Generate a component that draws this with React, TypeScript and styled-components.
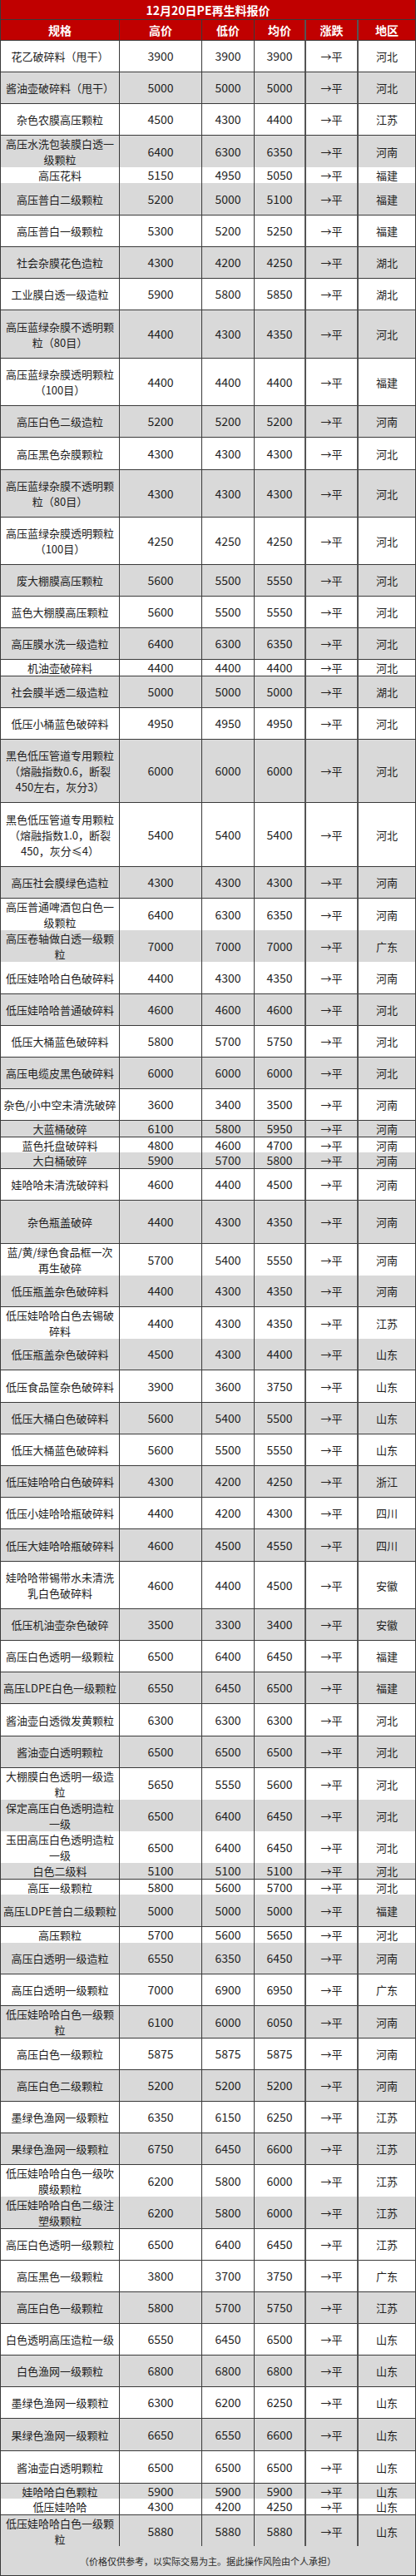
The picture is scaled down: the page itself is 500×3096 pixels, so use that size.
import styled, { createGlobalStyle } from 'styled-components';

const GlobalStyle = createGlobalStyle`
  html, body {
    margin: 0;
    padding: 0;
    background: #ffffff;
  }
  body {
    font-family: 'Noto Sans CJK SC', 'Noto Sans', sans-serif;
  }
  * {
    box-sizing: border-box;
  }
`;

// [top y of the row, 规格, 高价, 低价, 均价, 地区]
type PriceRow = [number, string, number, number, number, string];

const HEADERS = ['规格', '高价', '低价', '均价', '涨跌', '地区'];
const TABLE_END = 3060;

const ROWS: PriceRow[] = [
  [49, '花乙破碎料（甩干）', 3900, 3900, 3900, '河北'],
  [87, '酱油壶破碎料（甩干）', 5000, 5000, 5000, '河北'],
  [125, '杂色农膜高压颗粒', 4500, 4300, 4400, '江苏'],
  [163, '高压水洗包装膜白透一\n级颗粒', 6400, 6300, 6350, '河南'],
  [201, '高压花料', 5150, 4950, 5050, '福建'],
  [220, '高压普白二级颗粒', 5200, 5000, 5100, '福建'],
  [259, '高压普白一级颗粒', 5300, 5200, 5250, '福建'],
  [297, '社会杂膜花色造粒', 4300, 4200, 4250, '湖北'],
  [335, '工业膜白透一级造粒', 5900, 5800, 5850, '湖北'],
  [373, '高压蓝绿杂膜不透明颗\n粒（80目）', 4400, 4300, 4350, '河北'],
  [431, '高压蓝绿杂膜透明颗粒\n（100目）', 4400, 4400, 4400, '福建'],
  [488, '高压白色二级造粒', 5200, 5200, 5200, '河南'],
  [526, '高压黑色杂膜颗粒', 4300, 4300, 4300, '河北'],
  [565, '高压蓝绿杂膜不透明颗\n粒（80目）', 4300, 4300, 4300, '河北'],
  [622, '高压蓝绿杂膜透明颗粒\n（100目）', 4250, 4250, 4250, '河北'],
  [679, '废大棚膜高压颗粒', 5600, 5500, 5550, '河北'],
  [717, '蓝色大棚膜高压颗粒', 5600, 5500, 5550, '河北'],
  [755, '高压膜水洗一级造粒', 6400, 6300, 6350, '河北'],
  [793, '机油壶破碎料', 4400, 4400, 4400, '河北'],
  [813, '社会膜半透二级造粒', 5000, 5000, 5000, '湖北'],
  [851, '低压小桶蓝色破碎料', 4950, 4950, 4950, '河北'],
  [889, '黑色低压管道专用颗粒\n（熔融指数0.6，断裂\n450左右，灰分3）', 6000, 6000, 6000, '河北'],
  [965, '黑色低压管道专用颗粒\n（熔融指数1.0，断裂\n450，灰分≤4）', 5400, 5400, 5400, '河北'],
  [1042, '高压社会膜绿色造粒', 4300, 4300, 4300, '河南'],
  [1080, '高压普通啤酒包白色一\n级颗粒', 6400, 6300, 6350, '河南'],
  [1118, '高压卷轴做白透一级颗\n粒', 7000, 7000, 7000, '广东'],
  [1156, '低压娃哈哈白色破碎料', 4400, 4300, 4350, '河南'],
  [1195, '低压娃哈哈普通破碎料', 4600, 4600, 4600, '河北'],
  [1233, '低压大桶蓝色破碎料', 5800, 5700, 5750, '河北'],
  [1271, '高压电缆皮黑色破碎料', 6000, 6000, 6000, '河北'],
  [1309, '杂色/小中空未清洗破碎', 3600, 3400, 3500, '河南'],
  [1347, '大蓝桶破碎', 6100, 5800, 5950, '河南'],
  [1367, '蓝色托盘破碎料', 4800, 4600, 4700, '河南'],
  [1385, '大白桶破碎', 5900, 5700, 5800, '河南'],
  [1405, '娃哈哈未清洗破碎料', 4600, 4400, 4500, '河南'],
  [1443, '杂色瓶盖破碎', 4400, 4300, 4350, '河南'],
  [1495, '蓝/黄/绿色食品框一次\n再生破碎', 5700, 5400, 5550, '河南'],
  [1533, '低压瓶盖杂色破碎料', 4400, 4300, 4350, '河南'],
  [1571, '低压娃哈哈白色去锡破\n碎料', 4400, 4300, 4350, '江苏'],
  [1609, '低压瓶盖杂色破碎料', 4500, 4300, 4400, '山东'],
  [1647, '低压食品筐杂色破碎料', 3900, 3600, 3750, '山东'],
  [1686, '低压大桶白色破碎料', 5600, 5400, 5500, '山东'],
  [1724, '低压大桶蓝色破碎料', 5600, 5500, 5550, '山东'],
  [1762, '低压娃哈哈白色破碎料', 4300, 4200, 4250, '浙江'],
  [1800, '低压小娃哈哈瓶破碎料', 4400, 4200, 4300, '四川'],
  [1838, '低压大娃哈哈瓶破碎料', 4600, 4500, 4550, '四川'],
  [1877, '娃哈哈带锡带水未清洗\n乳白色破碎料', 4600, 4400, 4500, '安徽'],
  [1934, '低压机油壶杂色破碎', 3500, 3300, 3400, '安徽'],
  [1972, '高压白色透明一级颗粒', 6500, 6400, 6450, '福建'],
  [2010, '高压LDPE白色一级颗粒', 6550, 6450, 6500, '福建'],
  [2048, '酱油壶白透微发黄颗粒', 6300, 6300, 6300, '河北'],
  [2087, '酱油壶白透明颗粒', 6500, 6500, 6500, '河北'],
  [2125, '大棚膜白色透明一级造\n粒', 5650, 5550, 5600, '河北'],
  [2163, '保定高压白色透明造粒\n一级', 6500, 6400, 6450, '河北'],
  [2201, '玉田高压白色透明造粒\n一级', 6500, 6400, 6450, '河北'],
  [2239, '白色二级料', 5100, 5100, 5100, '河北'],
  [2259, '高压一级颗粒', 5800, 5600, 5700, '河北'],
  [2277, '高压LDPE普白二级颗粒', 5000, 5000, 5000, '福建'],
  [2316, '高压颗粒', 5700, 5600, 5650, '河北'],
  [2335, '高压白透明一级造粒', 6550, 6350, 6450, '河南'],
  [2373, '高压白透明一级颗粒', 7000, 6900, 6950, '广东'],
  [2411, '低压娃哈哈白色一级颗\n粒', 6100, 6000, 6050, '河南'],
  [2450, '高压白色一级颗粒', 5875, 5875, 5875, '河南'],
  [2488, '高压白色二级颗粒', 5200, 5200, 5200, '河南'],
  [2526, '墨绿色渔网一级颗粒', 6350, 6150, 6250, '江苏'],
  [2564, '果绿色渔网一级颗粒', 6750, 6450, 6600, '江苏'],
  [2602, '低压娃哈哈白色一级吹\n膜级颗粒', 6200, 5800, 6000, '江苏'],
  [2640, '低压娃哈哈白色二级注\n塑级颗粒', 6200, 5800, 6000, '江苏'],
  [2679, '高压白色透明一级颗粒', 6500, 6400, 6450, '江苏'],
  [2717, '高压黑色一级颗粒', 3800, 3700, 3750, '广东'],
  [2755, '高压白色一级颗粒', 5800, 5700, 5750, '江苏'],
  [2793, '白色透明高压造粒一级', 6550, 6450, 6500, '山东'],
  [2831, '白色渔网一级颗粒', 6800, 6800, 6800, '山东'],
  [2869, '墨绿色渔网一级颗粒', 6300, 6200, 6250, '山东'],
  [2907, '果绿色渔网一级颗粒', 6650, 6550, 6600, '山东'],
  [2946, '酱油壶白透明颗粒', 6500, 6500, 6500, '山东'],
  [2985, '娃哈哈白色颗粒', 5900, 5900, 5900, '山东'],
  [3003, '低压娃哈哈', 4300, 4200, 4250, '山东'],
  [3023, '低压娃哈哈白色一级颗\n粒', 5880, 5880, 5880, '山东'],
];

// the sheet's banding slips once, at 高压黑色一级颗粒 (two white rows in a row)
const isGray = (n: number) => (n < 70 ? n % 2 === 0 : n % 2 === 1);

export default function App() {
  return (
    <>
      <GlobalStyle />
      <Sheet>
        <Title>12月20日PE再生料报价</Title>
        <Row $h={25} $bg="#c00000">
          {HEADERS.map((h, i) => (
            <HeadCell key={h} $thick={i === 3 || i === 4}>
              {h}
            </HeadCell>
          ))}
        </Row>
        {ROWS.map(([y, name, hi, lo, avg, area], i) => {
          const next = i + 1 < ROWS.length ? ROWS[i + 1][0] : TABLE_END;
          return (
            <Row key={y} $h={next - y} $bg={isGray(i + 1) ? '#d9d9d9' : '#ffffff'}>
              <Cell>{name}</Cell>
              <NumCell>{hi}</NumCell>
              <NumCell>{lo}</NumCell>
              <NumCell $thick>{avg}</NumCell>
              <Cell $thick>→平</Cell>
              <Cell>{area}</Cell>
            </Row>
          );
        })}
        <Footer>（价格仅供参考，以实际交易为主。据此操作风险由个人承担）</Footer>
      </Sheet>
    </>
  );
}

const Sheet = styled.div`
  width: 500px;
  display: flex;
  flex-direction: column;
  border-left: 1px solid #3a3a3a;
`;

const Title = styled.div`
  height: 24px;
  display: flex;
  align-items: center;
  justify-content: center;
  background: #c00000;
  color: #ffffff;
  font-size: 14px;
  font-weight: 700;
  border-right: 1px solid #3a3a3a;
  border-bottom: 1px solid #3a3a3a;
`;

const Row = styled.div<{ $h: number; $bg: string }>`
  display: grid;
  grid-template-columns: 143px 99px 63px 62px 63px 1fr;
  height: ${({ $h }) => $h}px;
  background: ${({ $bg }) => $bg};
`;

const Cell = styled.div<{ $thick?: boolean }>`
  display: flex;
  align-items: center;
  justify-content: center;
  text-align: center;
  white-space: pre-line;
  padding: 0 2px;
  overflow: visible;
  font-size: 13px;
  line-height: 19px;
  color: #1e1e1e;
  border-bottom: 1px solid #3a3a3a;
  border-right: ${({ $thick }) => ($thick ? '2px solid #555555' : '1px solid #3a3a3a')};
`;

const NumCell = styled(Cell)`
  font-size: 14px;
`;

const HeadCell = styled(Cell)`
  color: #ffffff;
  font-size: 14px;
  font-weight: 700;
`;

const Footer = styled.div`
  height: 36px;
  display: flex;
  align-items: center;
  justify-content: center;
  background: #d9d9d9;
  color: #2a2a2a;
  font-size: 11px;
  border-right: 1px solid #3a3a3a;
  border-bottom: 1px solid #3a3a3a;
`;
